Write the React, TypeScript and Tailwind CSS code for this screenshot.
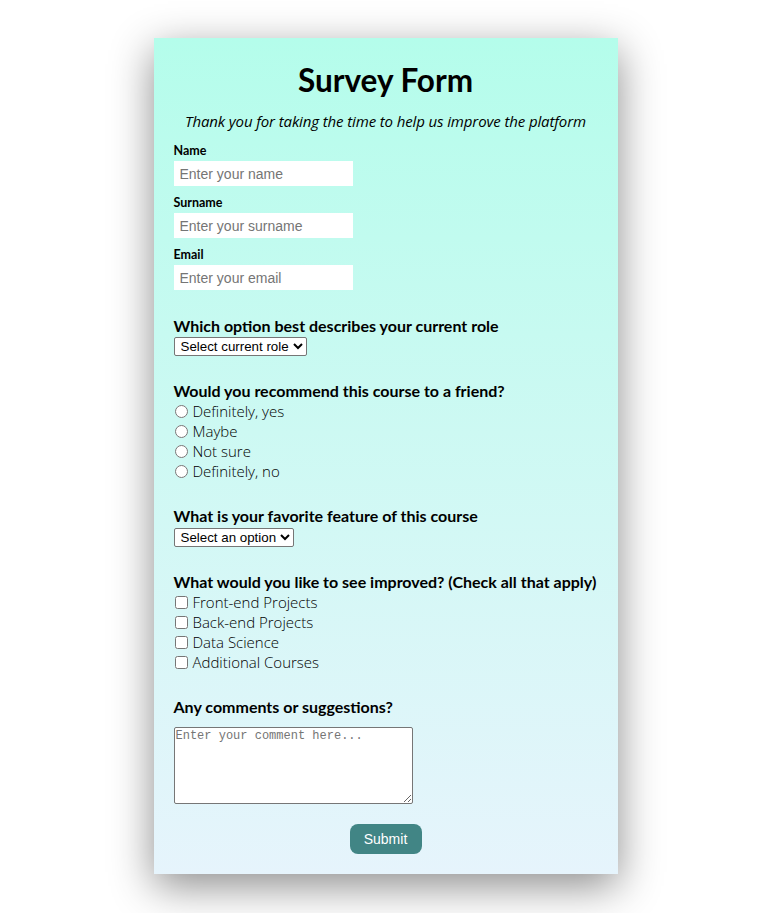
import React from 'react'

const roles = ['Student', 'Full time job', 'Full time learner', 'Prefer not to say', 'Other']
const features = ['Challenges', 'Projects', 'Community', 'Open Source']
const recommend = ['Definitely, yes', 'Maybe', 'Not sure', 'Definitely, no']
const improvements = ['Front-end Projects', 'Back-end Projects', 'Data Science', 'Additional Courses']

const fieldClass =
  "mt-[2px] block w-[179px] h-[25px] bg-white px-[6px] text-[14px] text-black placeholder:text-[#757575] font-['Liberation_Sans',Arial,sans-serif] outline-none"

const selectClass =
  "block h-[19px] border border-[#767676] rounded-[2px] bg-white pl-[2px] text-[13.33px] text-black font-['Liberation_Sans',Arial,sans-serif]"

function Question({ children }: { children: React.ReactNode }) {
  return <p className="text-[16px] leading-[20px] font-bold font-['Lato',sans-serif]">{children}</p>
}

function FieldLabel({ children }: { children: React.ReactNode }) {
  return <label className="block text-[12.5px] leading-[16px] font-bold font-['Lato',sans-serif]">{children}</label>
}

export default function App() {
  return (
    <div className="min-h-[913px] bg-white pt-[38px] pb-10 font-['Open_Sans','Noto_Sans',sans-serif] text-black">
      <form
        className="mx-auto w-[464px] bg-linear-to-b from-[#b4fdeb] to-[#e6f4fc] px-5 pt-[22px] pb-5 shadow-[0_12px_40px_rgba(0,0,0,0.45)]"
        onSubmit={(e) => e.preventDefault()}
      >
        <h1 className="text-center text-[31.5px] leading-[40px] font-bold font-['Lato',sans-serif]">Survey Form</h1>
        <p className="mt-[11px] text-center text-[15px] leading-[20px] italic tracking-[-0.12px]">
          Thank you for taking the time to help us improve the platform
        </p>

        {/* Personal details */}
        <div className="mt-3">
          <FieldLabel>Name</FieldLabel>
          <input className={fieldClass} placeholder="Enter your name" />
        </div>
        <div className="mt-[9px]">
          <FieldLabel>Surname</FieldLabel>
          <input className={fieldClass} placeholder="Enter your surname" />
        </div>
        <div className="mt-[9px]">
          <FieldLabel>Email</FieldLabel>
          <input type="email" className={fieldClass} placeholder="Enter your email" />
        </div>

        {/* Role */}
        <div className="mt-[26px]">
          <Question>Which option best describes your current role</Question>
          <select className={selectClass + ' mt-px'} defaultValue="">
            <option value="" disabled>
              Select current role
            </option>
            {roles.map((r) => (
              <option key={r}>{r}</option>
            ))}
          </select>
        </div>

        {/* Recommend */}
        <div className="mt-[25px]">
          <Question>Would you recommend this course to a friend?</Question>
          {recommend.map((r) => (
            <label key={r} className="flex h-[20px] items-center text-[15px] font-light">
              <input type="radio" name="recommend" className="m-0 ml-px mr-[5px] h-[13px] w-[13px]" />
              {r}
            </label>
          ))}
        </div>

        {/* Favorite feature */}
        <div className="mt-[25px]">
          <Question>What is your favorite feature of this course</Question>
          <select className={selectClass + ' mt-[2px]'} defaultValue="">
            <option value="" disabled>
              Select an option
            </option>
            {features.map((f) => (
              <option key={f}>{f}</option>
            ))}
          </select>
        </div>

        {/* Improvements */}
        <div className="mt-[25px]">
          <Question>What would you like to see improved? (Check all that apply)</Question>
          {improvements.map((i) => (
            <label key={i} className="flex h-[20px] items-center text-[15px] font-light">
              <input type="checkbox" className="m-0 ml-px mr-[5px] h-[13px] w-[13px]" />
              {i}
            </label>
          ))}
        </div>

        {/* Comments */}
        <div className="mt-[25px]">
          <Question>Any comments or suggestions?</Question>
          <textarea
            className="mt-[10px] block h-[77px] w-[239px] rounded-[2px] border border-[#767676] bg-white px-[1px] py-0 text-[12px] leading-[17px] font-['Liberation_Mono','DejaVu_Sans_Mono',monospace] placeholder:text-[#757575] outline-none"
            placeholder="Enter your comment here..."
          />
        </div>

        <div className="mt-5 flex justify-center">
          <button
            type="submit"
            className="h-[30px] w-[72px] rounded-[8px] bg-[#418585] text-[14px] text-white font-['Liberation_Sans',Arial,sans-serif]"
          >
            Submit
          </button>
        </div>
      </form>
    </div>
  )
}
